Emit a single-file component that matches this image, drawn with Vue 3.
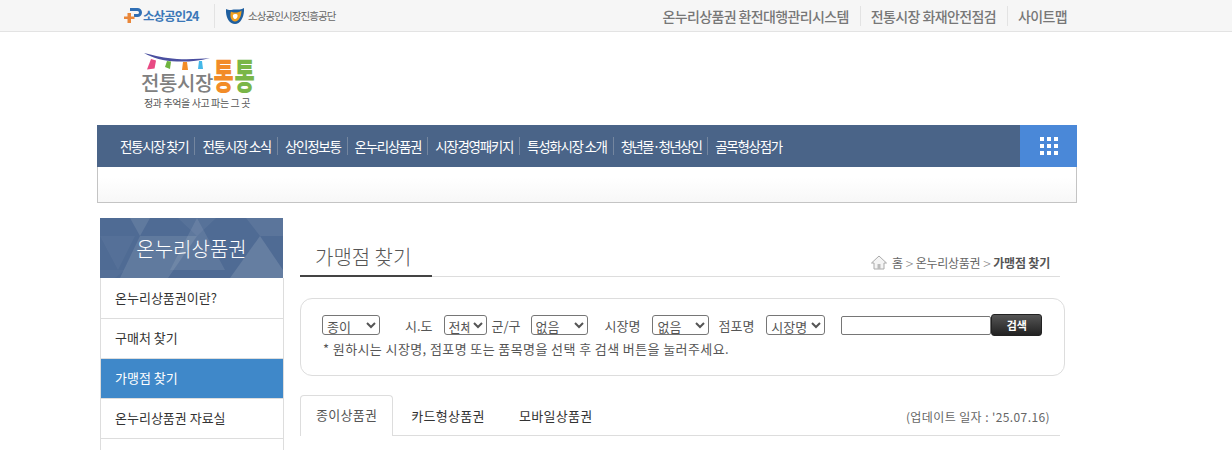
<script setup>
const menus = ['전통시장 찾기', '전통시장 소식', '상인정보통', '온누리상품권', '시장경영패키지', '특성화시장 소개', '청년몰·청년상인', '골목형상점가']
const sideMenus = ['온누리상품권이란?', '구매처 찾기', '가맹점 찾기', '온누리상품권 자료실']
const tabs = ['종이상품권', '카드형상품권', '모바일상품권']
</script>

<template>
  <div class="page">
    <header class="topbar">
      <div class="inner topbar-in">
        <div class="top-left">
          <a class="site24">
            <svg width="19" height="17" viewBox="0 0 19 17">
              <path d="M6 1h7.500a4.500 4.500 0 0 1 0 9H10V7h3.500a1.500 1.500 0 0 0 0-3H6z" fill="#2f6fb5" />
              <path d="M3.500 6H7v3.500h3.500V12H7v4H3.500v-4H0V9.500h3.500z" fill="#e9873a" />
            </svg>
            <span>소상공인24</span>
          </a>
          <a class="semas">
            <svg width="18" height="16" viewBox="0 0 18 16">
              <path d="M0 1c4 2 6 .5 9 .5S15 2 18 0c.500 8-3 16-9 16S-.500 9 0 1z" fill="#1f5f9f" />
              <path d="M5 3.500C7 5 13 5 15.500 2.500 15.500 8 13 13.500 9 13.500S3.500 8 5 3.500z" fill="#f0a020" />
              <path d="M7 7c1-1.200 4-1.200 4.500 0 .5 2-1 4-2.500 4S6.500 8.500 7 7z" fill="#fff" />
            </svg>
            <span>소상공인시장진흥공단</span>
          </a>
        </div>
        <ul class="top-right">
          <li>온누리상품권 환전대행관리시스템</li>
          <li>전통시장 화재안전점검</li>
          <li>사이트맵</li>
        </ul>
      </div>
    </header>

    <div class="inner logo-row">
      <div class="logo">
        <svg class="bunting" width="66" height="18" viewBox="0 0 66 18">
          <path d="M0 0c12 3 20 5 33 6 12 .5 24 0 33-1-12 3-22 4-33 3.500C20 8 8 5 0 0z" fill="#4a4fa0" />
          <path d="M7 6l5 1.500-1.500 8-7.500 1z" fill="#e84a83" />
          <path d="M23 8l4 .5-1 7.500-5-2z" fill="#6fb33f" />
          <path d="M39 9h4l1 8h-6z" fill="#f28c28" />
          <path d="M55 8h3l1 8h-5z" fill="#45b8e8" />
        </svg>
        <div class="logo-name"><span class="logo-gray">전통시장</span><span class="logo-o">통</span><span class="logo-g">통</span></div>
        <div class="logo-sub">정과 추억을 사고 파는 그 곳</div>
      </div>
    </div>

    <div class="inner">
      <nav class="gnb">
        <ul>
          <li v-for="m in menus" :key="m" :class="{ tight: m.includes('·') }">{{ m }}</li>
        </ul>
        <div class="allmenu">
          <svg width="18" height="18" viewBox="0 0 18 18" fill="#fff">
            <rect v-for="n in 9" :key="n" :x="(n - 1) % 3 * 7" :y="Math.floor((n - 1) / 3) * 7" width="4" height="4" />
          </svg>
        </div>
      </nav>
      <div class="subbar"></div>
    </div>

    <div class="inner body">
      <aside class="side">
        <div class="side-head">
          <svg class="side-pattern" width="183" height="60" viewBox="0 0 183 60">
            <g fill="#fff">
              <polygon points="30,0 50,0 40,18" opacity=".1" />
              <polygon points="78,0 116,0 97,18" opacity=".05" />
              <polygon points="146,0 183,0 183,18 160,18" opacity=".07" />
              <polygon points="0,18 35,18 18,52" opacity=".04" />
              <polygon points="40,18 97,18 68,60 20,60" opacity=".1" />
              <polygon points="97,0 125,52 70,52" opacity=".09" />
              <polygon points="160,18 183,52 183,60 130,60" opacity=".13" />
              <polygon points="0,52 25,52 15,60 0,60" opacity=".03" />
            </g>
          </svg>
          <span>온누리상품권</span>
        </div>
        <ul>
          <li v-for="s in sideMenus" :key="s" :class="{ on: s === '가맹점 찾기' }">{{ s }}</li>
          <li></li>
        </ul>
      </aside>

      <main class="content">
        <div class="title-row">
          <h2>가맹점 찾기</h2>
          <div class="crumb">
            <svg width="16" height="15" viewBox="0 0 16 15">
              <path d="M8 1L.5 8H3v6h10V8h2.500z" fill="#f4f4f4" stroke="#aaa" />
              <rect x="6.500" y="9" width="3" height="5" fill="#bbb" />
            </svg>
            <span class="c-home">홈</span><i>&gt;</i><span>온누리상품권</span><i>&gt;</i><b>가맹점 찾기</b>
          </div>
        </div>

        <div class="search">
          <div class="search-row">
            <select class="w58"><option>종이</option></select>
            <label class="l1">시.도</label>
            <select class="w43"><option>전체</option></select>
            <label class="l2">군/구</label>
            <select class="w57"><option>없음</option></select>
            <label class="l3">시장명</label>
            <select class="w57"><option>없음</option></select>
            <label class="l4">점포명</label>
            <select class="w59"><option>시장명</option></select>
            <input type="text" />
            <button>검색</button>
          </div>
          <p>* 원하시는 시장명, 점포명 또는 품목명을 선택 후 검색 버튼을 눌러주세요.</p>
        </div>

        <div class="tabs">
          <a v-for="(t, i) in tabs" :key="t" :class="{ on: i === 0 }">{{ t }}</a>
          <span class="update">(업데이트 일자 : '25.07.16)</span>
        </div>
      </main>
    </div>
  </div>
</template>

<style scoped>
.page { width: 1232px; height: 450px; overflow: hidden; background: #fff; font-family: "Noto Sans CJK KR", "Noto Sans", sans-serif; color: #333; }
.inner { width: 980px; margin-left: 97px; }
ul { list-style: none; margin: 0; padding: 0; }

.topbar { height: 31px; background: #f6f6f6; border-bottom: 1px solid #e3e3e3; }
.topbar-in { display: flex; justify-content: space-between; align-items: center; height: 31px; }
.top-left { display: flex; align-items: center; height: 100%; }
.site24 { display: flex; align-items: center; margin-left: 27px; width: 90px; font-size: 12.5px; font-weight: 700; color: #3b78b8; letter-spacing: -0.9px; height: 24px; border-right: 1px solid #e3e3e3; }
.semas { display: flex; align-items: center; gap: 4px; margin-left: 11px; font-size: 10.5px; color: #666; letter-spacing: -0.9px; }
.top-right { display: flex; align-items: center; font-size: 14px; font-weight: 500; color: #777; letter-spacing: -0.62px; }
.top-right li { padding: 0 11px 0 10px; border-left: 1px solid #e3e3e3; line-height: 20px; }
.top-right li:first-child { border-left: 0; }
.top-right li:last-child { padding-right: 10px; }

.logo-row { height: 93px; }
.logo { width: 130px; margin-left: 44px; padding-top: 21px; }
.bunting { display: block; margin-left: 3px; }
.logo-name { display: flex; height: 24px; line-height: 24px; }
.logo-gray { width: 72px; font-size: 20px; font-weight: 500; color: #808080; letter-spacing: -0.4px; white-space: nowrap; }
.logo-o, .logo-g { display: inline-block; width: 21px; text-align: center; font-size: 22px; font-weight: 900; transform: translateY(-10px) scale(1, 1.6); }
.logo-o { color: #f28c28; }
.logo-g { color: #7ab648; }
.logo-sub { font-size: 10px; color: #555; margin: 2px 0 0 3px; line-height: 12px; letter-spacing: -0.4px; white-space: nowrap; }

.gnb { display: flex; justify-content: space-between; height: 42px; background: #4a6488; }
.gnb ul { display: flex; align-items: center; padding-left: 16px; }
.gnb li { padding: 0 6px 0 7px; font-size: 13.500px; color: #fff; letter-spacing: -1.3px; line-height: 18px; border-left: 1px solid #74869f; white-space: nowrap; }
.gnb li:first-child { border-left: 0; }
.gnb li.tight { letter-spacing: -1.75px; }
.allmenu { display: flex; align-items: center; justify-content: center; width: 57px; background: #4a88d8; }
.subbar { height: 35px; border: 1px solid #c4c4c4; border-top: 0; background: linear-gradient(#fff 30%, #f7f7f7); }

.body { display: flex; margin-top: 15px; }
.side { width: 184px; margin-left: 3px; flex: none; }
.side-head { position: relative; height: 60px; width: 183px; background: #4f6b94; display: flex; align-items: center; justify-content: center; overflow: hidden; }
.side-pattern { position: absolute; left: 0; top: 0; }
.side-head span { position: relative; font-size: 20px; font-weight: 300; color: #fff; }
.side ul { border: 1px solid #ddd; border-width: 0 1px; padding-top: 1px; }
.side li { height: 40px; line-height: 37px; padding-left: 14px; border-bottom: 1px solid #ddd; font-size: 13px; color: #333; box-sizing: border-box; }
.side li.on { background: #3f88c9; color: #fff; }

.content { width: 765px; margin-left: 16px; flex: none; }
.title-row { display: flex; justify-content: space-between; align-items: flex-end; width: 760px; height: 58px; border-bottom: 1px solid #ddd; }
.title-row h2 { margin: 0 0 -1px; width: 117px; padding-left: 15px; font-size: 20px; font-weight: 300; color: #555; height: 34px; line-height: 32px; border-bottom: 2px solid #444; }
.crumb { display: flex; align-items: center; padding-right: 10px; height: 27px; font-size: 12px; color: #666; letter-spacing: -0.3px; }
.crumb i { width: 13px; text-align: center; font-style: normal; font-size: 14px; font-weight: 300; color: #888; }
.crumb svg { margin-right: 5px; }
.crumb b { font-weight: 700; color: #555; letter-spacing: -0.2px; }

.search { margin-top: 21px; height: 76px; border: 1px solid #ddd; border-radius: 12px; padding: 0 21px; box-sizing: content-box; }
.search-row { display: flex; align-items: center; height: 22px; margin-top: 15px; }
select { height: 20px; padding: 0; font-family: inherit; font-size: 13px; color: #555; background: #fff; border: 1px solid #767676; border-radius: 3px; box-sizing: border-box; }
.w58 { width: 58px; }
.w43 { width: 43px; }
.w57 { width: 57px; }
.w59 { width: 59px; }
label { font-size: 13px; color: #555; }
.l1 { margin-left: 25px; margin-right: 11px; }
.l2 { margin-left: 5px; margin-right: 10px; }
.l3 { margin-left: 17px; margin-right: 12px; }
.l4 { margin-left: 9px; margin-right: 12px; }
input { width: 150px; height: 19px; margin-left: 16px; padding: 0; box-sizing: border-box; border: 1px solid #767676; border-radius: 2px; background: #fff; }
button { width: 51px; height: 22px; padding: 0; border: 1px solid #222; border-radius: 3px; background: linear-gradient(#555, #222); color: #fff; font-family: inherit; font-size: 11px; font-weight: 700; }
.search p { margin: 3px 0 0 1px; font-size: 13px; color: #555; line-height: 20px; letter-spacing: 0.4px; }

.tabs { display: flex; align-items: flex-end; width: 760px; height: 40px; margin-top: 19px; border-bottom: 1px solid #ddd; }
.tabs a { display: block; height: 40px; line-height: 37px; margin: 0 0 -1px 2px; padding: 0 15px; font-size: 13px; letter-spacing: 0.3px; color: #333; border: 1px solid transparent; border-bottom: 0; box-sizing: border-box; }
.tabs a.on { margin-left: 0; border-color: #ddd; border-radius: 4px 4px 0 0; height: 41px; background: #fff; color: #555; }
.update { margin-left: auto; padding-right: 10px; line-height: 36px; font-size: 12px; color: #666; letter-spacing: 0.4px; }
</style>

<style>
html, body { margin: 0; overflow: hidden; }
</style>
